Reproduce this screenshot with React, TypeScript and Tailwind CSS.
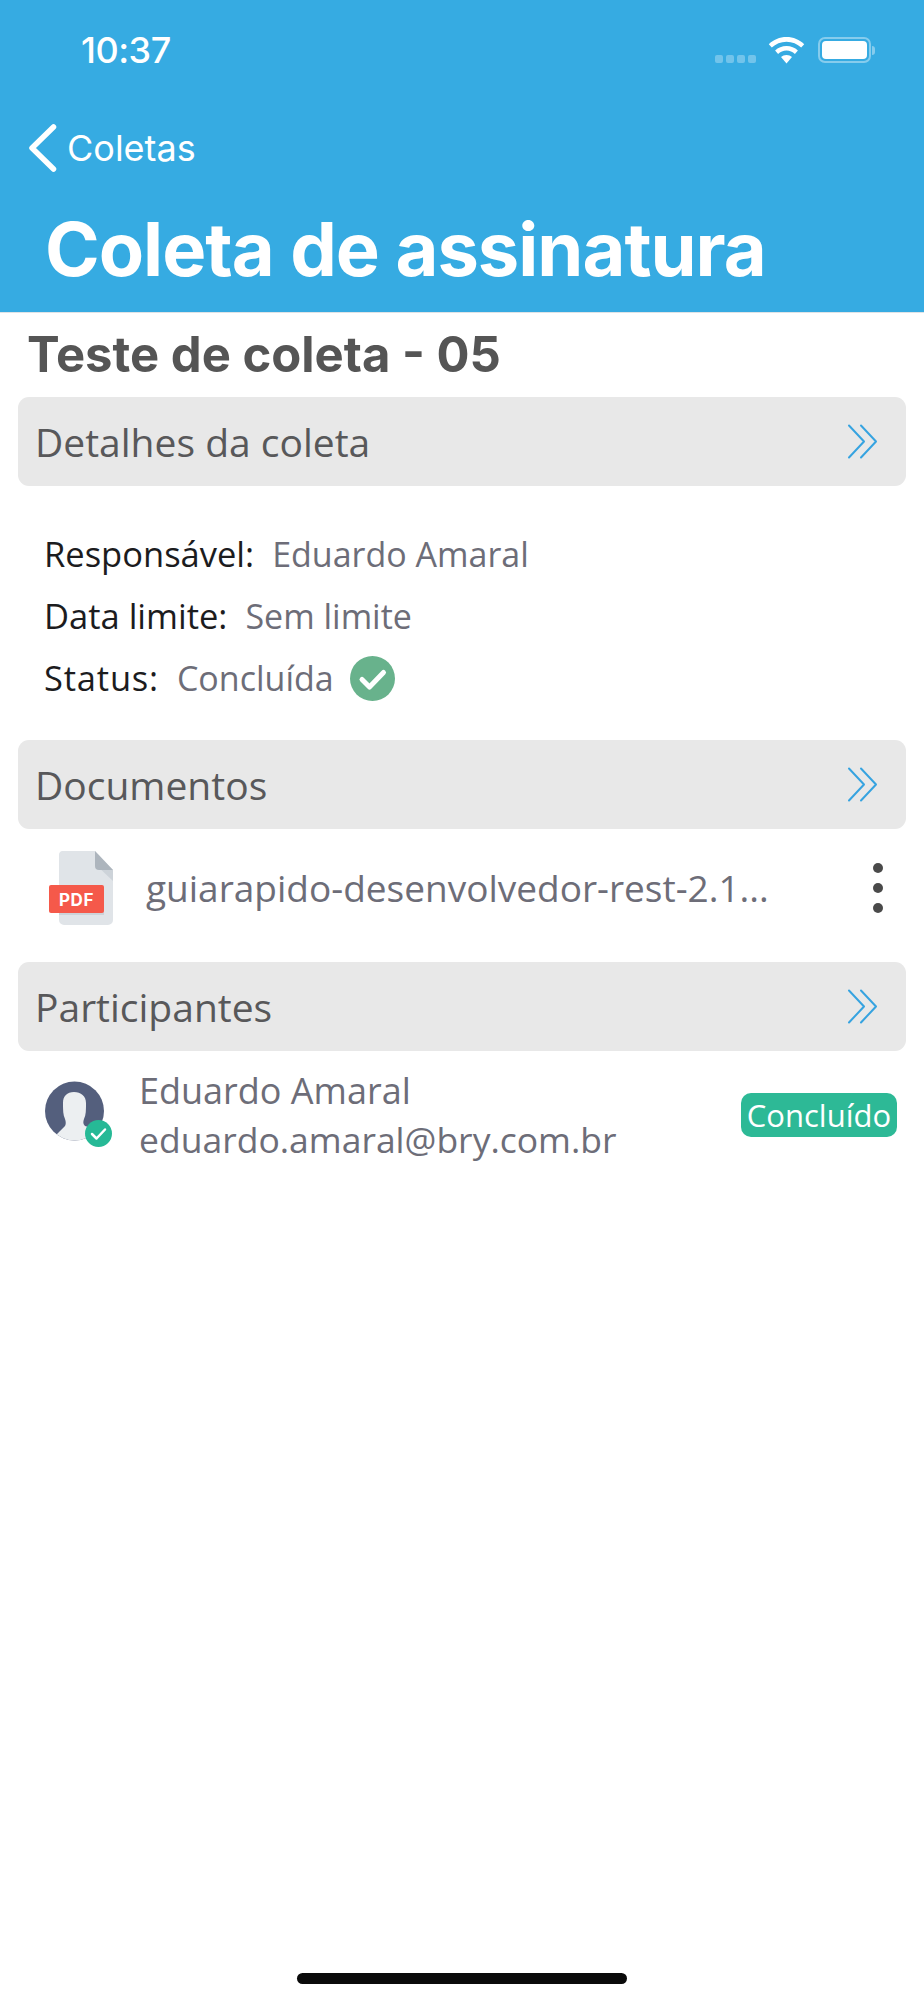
const sans = "font-['Open_Sans',sans-serif]"

function DoubleChevron() {
  return (
    <svg width="31" height="35" viewBox="0 0 31 35" fill="none" stroke="#36a3e0" strokeWidth="2" strokeLinecap="round" strokeLinejoin="round">
      <path d="M2 1.5 L17 17.5 L2 33.5" />
      <path d="M14 1.5 L29 17.5 L14 33.5" />
    </svg>
  )
}

function SectionBar({ title }: { title: string }) {
  return (
    <div className="mx-[18px] flex h-[89px] items-center justify-between rounded-[11px] bg-[#e8e8e8] pl-[17px] pr-[28px]">
      <span className={`${sans} text-[39px] leading-none text-[#58585a]`}>{title}</span>
      <DoubleChevron />
    </div>
  )
}

function InfoRow({ label, value, labelClass = "", children }: { label: string; value: string; labelClass?: string; children?: React.ReactNode }) {
  return (
    <div className={`${sans} flex h-[62px] items-center text-[34px]`}>
      <span className={`text-[34.5px] text-[#1c1c1e] ${labelClass}`}>{label}</span>
      <span className="ml-[18px] text-[#6d6d78]">{value}</span>
      {children}
    </div>
  )
}

export default function App() {
  return (
    <div className="flex h-[2000px] w-[924px] flex-col overflow-hidden bg-white">
      <header className="h-[313px] border-b border-[#dfe3e6] bg-[#36abe2] font-['Inter',sans-serif] text-white">
        <div className="flex h-[112px] items-start justify-between pl-[81px] pr-[49px] pt-[28px]">
          <span className="text-[36px] font-medium leading-[44px] tracking-[-0.5px]">10:37</span>
          <div className="mt-[9px] flex items-start">
            <div className="mt-[18px] flex gap-[3px]">
              {[0, 1, 2, 3].map((i) => (
                <span key={i} className="h-[8px] w-[8px] rounded-[2px] bg-white/30" />
              ))}
            </div>
            <svg className="ml-[12px]" width="37" height="27" viewBox="0 0 37 27" fill="#fff">
              <path d="M18.5 0C11.6 0 5.4 2.700.8 7.200l3 3.400C7.600 6.900 12.800 4.700 18.500 4.700s10.900 2.200 14.700 5.900l3-3.400C31.600 2.700 25.400 0 18.500 0z" />
              <path d="M18.500 9c-4.400 0-8.400 1.700-11.400 4.500l3 3.400c2.200-2 5.200-3.300 8.400-3.300s6.200 1.300 8.400 3.300l3-3.400C26.900 10.700 22.900 9 18.500 9z" />
              <path d="M18.500 18c-2.100 0-4 .8-5.500 2.100l5.500 6.500 5.500-6.500C22.500 18.800 20.600 18 18.500 18z" />
            </svg>
            <div className="ml-[13px] flex items-center">
              <div className="h-[26px] w-[53px] rounded-[7px] border-2 border-white/40 p-[2px]">
                <div className="h-full w-full rounded-[4px] bg-white" />
              </div>
              <div className="ml-[1px] h-[9px] w-[3px] rounded-r-full bg-white/40" />
            </div>
          </div>
        </div>
        <div className="flex h-[71px] items-center pl-[28px]">
          <svg width="29" height="48" viewBox="0 0 29 48" fill="none" stroke="#fff" strokeWidth="5.500" strokeLinecap="round" strokeLinejoin="round">
            <path d="M25.500 3 L4 24 L25.500 45" />
          </svg>
          <span className="ml-[10px] text-[36px] leading-none">Coletas</span>
        </div>
        <h1 className="ml-[45px] mt-[22px] text-[74px] font-bold leading-[88px] tracking-[-1px]">Coleta de assinatura</h1>
      </header>

      <h2 className="ml-[27px] mt-[13px] font-['Inter',sans-serif] text-[49px] font-bold leading-[58px] text-[#555555]">Teste de coleta - 05</h2>
      <div className="mt-[13px]">
        <SectionBar title="Detalhes da coleta" />
      </div>

      <div className="mt-[37px] pl-[44px]">
        <InfoRow label="Responsável:" value="Eduardo Amaral" />
        <InfoRow label="Data limite:" value="Sem limite" />
        <InfoRow label="Status:" value="Concluída" labelClass="tracking-[0.8px]">
          <svg className="ml-[16px]" width="45" height="45" viewBox="0 0 45 45">
            <circle cx="22.500" cy="22.500" r="22.500" fill="#68b28c" />
            <path d="M12 23.500 L19.500 31 L33.500 16.500" fill="none" stroke="#fff" strokeWidth="5" strokeLinecap="round" strokeLinejoin="round" />
          </svg>
        </InfoRow>
      </div>

      <div className="mt-[31px]">
        <SectionBar title="Documentos" />
      </div>

      <div className="mt-[22px] flex h-[74px] items-center pl-[49px] pr-[41px]">
        <svg width="64" height="74" viewBox="0 0 64 74">
          <path d="M13 0 H46 L64 19 V69 a5 5 0 0 1 -5 5 H15 a5 5 0 0 1 -5 -5 V4 a4 4 0 0 1 3 -4 z" fill="#e0e4e8" />
          <path d="M46 13 L64 30 V19 z" fill="#cdd3d9" />
          <path d="M46 0 L64 19 H50 a4 4 0 0 1 -4 -4 z" fill="#adb5bd" />
          <rect x="10" y="58" width="45" height="6" fill="#cdd3d9" />
          <rect x="0" y="34" width="55" height="28" rx="2" fill="#f5594a" />
          <text x="27.500" y="54.500" textAnchor="middle" fontFamily="Inter, sans-serif" fontWeight="700" fontSize="17" letterSpacing="0.5" fill="#fff">PDF</text>
        </svg>
        <span className={`${sans} ml-[33px] flex-1 text-[37px] text-[#6d6d78]`}>guiarapido-desenvolvedor-rest-2.1...</span>
        <div className="-mt-[1px] flex flex-col gap-[10px]">
          {[0, 1, 2].map((i) => (
            <span key={i} className="h-[10px] w-[10px] rounded-full bg-[#4a4a4a]" />
          ))}
        </div>
      </div>

      <div className="mt-[37px]">
        <SectionBar title="Participantes" />
      </div>

      <div className="mt-[16px] flex items-center pl-[45px] pr-[27px]">
        <svg width="67" height="67" viewBox="0 0 67 67" className="mt-[13px] self-start">
          <defs>
            <clipPath id="avatar"><circle cx="29.500" cy="31" r="29.500" /></clipPath>
          </defs>
          <circle cx="29.500" cy="31" r="29.500" fill="#545f7d" />
          <path clipPath="url(#avatar)" d="M29 12 C22 12 18 16 18 23 C18 30 18 35 20 39 C21 42 21 44 20 46 L4 62 V70 H60 V52 L40 46 C38 44 38 42 39 39 C41 35 41 30 41 23 C41 16 36 12 29 12 Z" fill="#eceff1" />
          <circle cx="53.500" cy="53.500" r="13.500" fill="#26b996" />
          <path d="M47 54 L51.500 58.500 L60 49.500" fill="none" stroke="#fff" strokeWidth="2.500" strokeLinecap="round" strokeLinejoin="round" />
        </svg>
        <div className={`${sans} ml-[27px] flex-1 leading-[48px] text-[#6d6d78]`}>
          <div className="text-[36px]">Eduardo Amaral</div>
          <div className="text-[35.500px]">eduardo.amaral@bry.com.br</div>
        </div>
        <span className={`${sans} flex h-[44px] w-[156px] items-center justify-center rounded-[10px] bg-[#2db996] text-[31px] leading-none text-white`}>Concluído</span>
      </div>

      <div className="mb-[16px] mt-auto flex justify-center">
        <div className="h-[11px] w-[330px] rounded-full bg-[#0a0a0a]" />
      </div>
    </div>
  )
}
